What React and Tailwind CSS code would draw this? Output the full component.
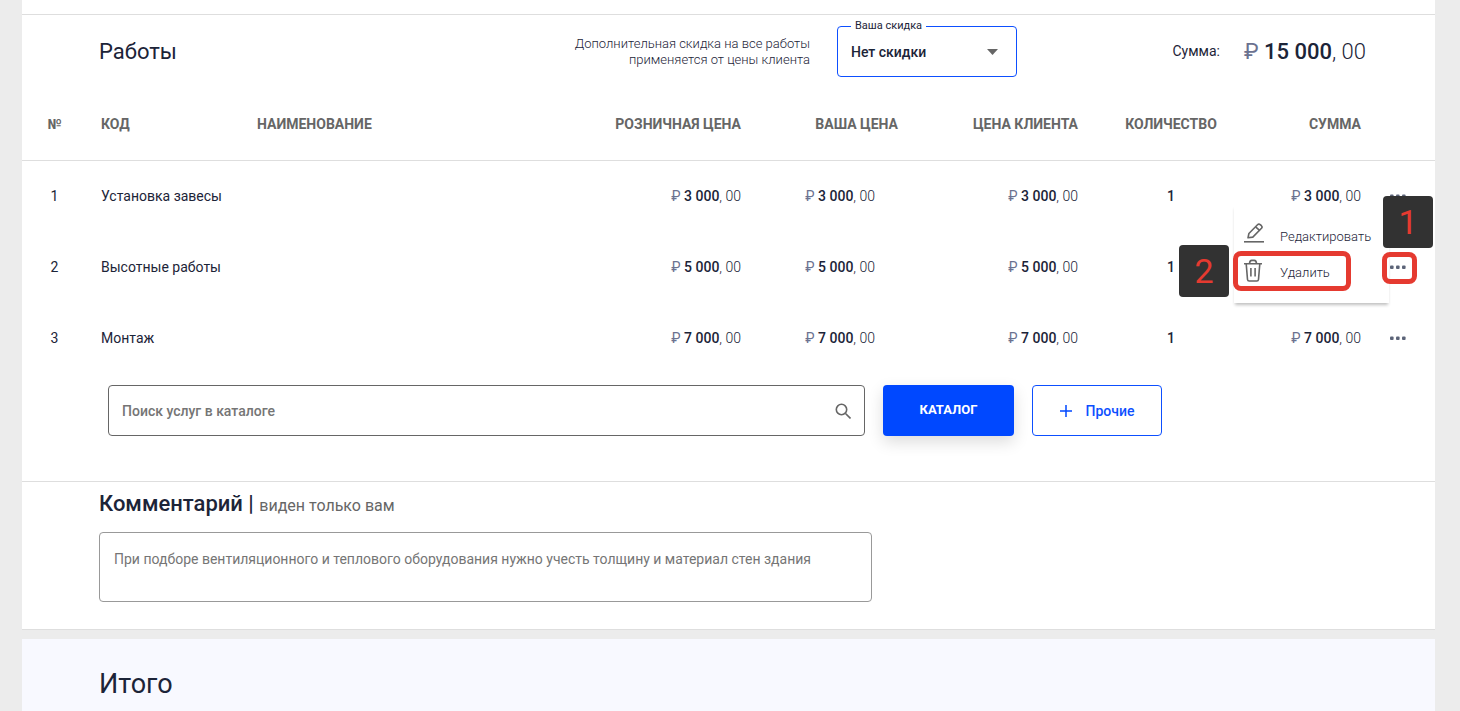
import { useState } from "react";

const works = [
  { id: 1, code: "Установка завесы", price: "3 000", count: 1 },
  { id: 2, code: "Высотные работы", price: "5 000", count: 1 },
  { id: 3, code: "Монтаж", price: "7 000", count: 1 },
];

function Price({ value }) {
  return (
    <span className="whitespace-nowrap">
      <span className="text-[#6b7290]">₽</span>{" "}
      <span className="font-medium">{value}</span>
      <span className="font-light">, 00</span>
    </span>
  );
}

function DotsIcon() {
  return (
    <svg width="18" height="6" viewBox="0 0 18 6" fill="#5c6478">
      <rect x="1" y="1.500" width="3.600" height="3.400" rx="1" />
      <rect x="7" y="1.500" width="3.600" height="3.400" rx="1" />
      <rect x="13" y="1.500" width="3.600" height="3.400" rx="1" />
    </svg>
  );
}

function EditIcon() {
  return (
    <svg width="20" height="28" viewBox="0 0 20 28" fill="none" stroke="#666" strokeWidth="1.600">
      <path d="M0 18.800h20" />
      <path d="M4 14.800l.9-4.300 8.600-8.700q1.300-1.300 2.700-.2l1.200 1.100q1.300 1.300.1 2.600l-8.700 8.800z" strokeLinejoin="round" />
      <path d="M11.600 3.800l4.200 3.900" />
    </svg>
  );
}

function TrashIcon() {
  return (
    <svg width="20" height="28" viewBox="0 0 20 28" fill="none" stroke="#666" strokeWidth="1.600">
      <path d="M0 4.800h18M5.500 4.800q.2-3.400 2.200-3.400h2.600q2 0 2.200 3.400M2.200 4.800l1.300 15.700q.2 1.500 1.600 1.500h7.800q1.400 0 1.600-1.500l1.300-15.700" strokeLinejoin="round" />
      <path d="M6.900 9v8.500M11.100 9v8.500" />
    </svg>
  );
}

function Badge({ children, className }) {
  return (
    <span
      className={`absolute z-20 flex h-[52px] w-[50px] items-center justify-center rounded-sm bg-[#323232] text-[34px] font-normal text-[#e53a30] ${className}`}
    >
      {children}
    </span>
  );
}

function RowMenu() {
  return (
    <div className="absolute -top-[26px] right-[46px] z-10 w-[155px] bg-white pt-3.5 pb-3 text-[13px] font-light shadow-[0_3px_3px_-1px_rgba(0,0,0,0.25)]">
      <button className="flex h-9 w-full items-center gap-4 pl-2.5">
        <EditIcon />
        Редактировать
      </button>
      <button className="relative flex h-9 w-full items-center gap-4 pl-2.5">
        <TrashIcon />
        Удалить
        <span className="absolute -top-1 -left-px h-10 w-[118px] rounded-lg border-5 border-[#e53a30]" />
      </button>
      <Badge className="top-10 right-40">2</Badge>
    </div>
  );
}

export default function App() {
  const [discount, setDiscount] = useState("none");
  const [search, setSearch] = useState("");
  const [comment, setComment] = useState("");
  const [openMenu, setOpenMenu] = useState(2);

  return (
    <div className="min-h-screen bg-[#ececec] pr-[25px] pl-[22px] font-[Roboto,sans-serif] text-sm text-[#1c2438]">
      <section className="border-b border-[#dedede] bg-white pt-3.5">
        <header className="flex h-[74px] items-center border-t border-[#dedede] pr-[69px] pl-[77px]">
          <h2 className="text-[22px]">Работы</h2>
          <p className="ml-auto w-[250px] text-right text-[13px] leading-4 font-light">
            Дополнительная скидка на все работы применяется от цены клиента
          </p>
          <div className="relative ml-[27px]">
            <label htmlFor="discount" className="absolute -top-2 left-3.5 bg-white px-1 text-[11px] leading-4">
              Ваша скидка
            </label>
            <select
              id="discount"
              value={discount}
              onChange={(e) => setDiscount(e.target.value)}
              className="h-[51px] w-[180px] appearance-none rounded border border-[#0d4fff] pr-10 pl-[13px] font-medium"
            >
              <option value="none">Нет скидки</option>
              <option value="5">5%</option>
              <option value="10">10%</option>
            </select>
            <svg className="pointer-events-none absolute top-[23px] right-[19px]" width="11" height="6" viewBox="0 0 11 6" fill="#666">
              <path d="M0 0h11L5.500 6z" />
            </svg>
          </div>
          <div className="flex w-[349px] items-center justify-end gap-6">
            <span>Сумма:</span>
            <span className="text-[22px]">
              <Price value="15 000" />
            </span>
          </div>
        </header>

        <table className="w-full table-fixed text-left">
          <thead className="border-b border-[#dedede] text-[#666] uppercase">
            <tr className="h-[72px]">
              <th className="w-[65px] text-center font-bold">№</th>
              <th className="w-[156px] pl-3.5 font-bold">Код</th>
              <th className="pl-3.5 font-bold">Наименование</th>
              <th className="w-[155px] pr-3.5 text-right font-bold">Розничная цена</th>
              <th className="w-[157px] pr-3.5 text-right font-bold">Ваша цена</th>
              <th className="w-[180px] pr-3.5 text-right font-bold">Цена клиента</th>
              <th className="w-[158px] text-center font-bold">Количество</th>
              <th className="w-[125px] pr-3.5 text-right font-bold">Сумма</th>
              <th className="w-[60px]" aria-label="Действия" />
            </tr>
          </thead>
          <tbody>
            {works.map((work) => (
              <tr key={work.id} className="h-[71px]">
                <td className="text-center">{work.id}</td>
                <td className="pl-3.5">{work.code}</td>
                <td />
                <td className="pr-3.5 text-right"><Price value={work.price} /></td>
                <td className="pr-[37px] text-right"><Price value={work.price} /></td>
                <td className="pr-3.5 text-right"><Price value={work.price} /></td>
                <td className="text-center font-medium">{work.count}</td>
                <td className="pr-3.5 text-right">
                  {openMenu !== work.id && <Price value={work.price} />}
                </td>
                <td className="relative pl-3.5">
                  <button
                    className="flex h-6 items-center"
                    aria-label="Действия"
                    onClick={() => setOpenMenu(openMenu === work.id ? null : work.id)}
                  >
                    <DotsIcon />
                  </button>
                  {openMenu === work.id && (
                    <>
                      <RowMenu />
                      <Badge className="-top-[35px] right-0.5">1</Badge>
                      <span className="pointer-events-none absolute top-[21px] left-[7px] z-20 h-8 w-[35px] rounded-lg border-5 border-[#e53a30]" />
                    </>
                  )}
                </td>
              </tr>
            ))}
          </tbody>
        </table>

        <div className="flex gap-[18px] pt-3 pr-[273px] pb-[45px] pl-[86px]">
          <div className="flex h-[51px] flex-1 items-center rounded-sm border border-[#666] px-[13px]">
            <input
              aria-label="Поиск услуг в каталоге"
              placeholder="Поиск услуг в каталоге"
              value={search}
              onChange={(e) => setSearch(e.target.value)}
              className="flex-1 font-medium outline-none placeholder:text-[#757575]"
            />
            <svg width="16" height="16" viewBox="0 0 16 16" fill="none" stroke="#666" strokeWidth="1.600">
              <circle cx="6.500" cy="6.500" r="5.200" />
              <path d="M10.500 10.500l5 5" />
            </svg>
          </div>
          <button className="w-[131px] rounded bg-[#0048ff] text-[13px] font-bold text-white shadow-[0_6px_16px_rgba(0,0,0,0.14)]">
            КАТАЛОГ
          </button>
          <button className="flex w-[130px] items-center justify-center gap-3.5 rounded border border-[#0d4fff] font-medium text-[#0d4fff]">
            <svg width="12" height="12" viewBox="0 0 12 12" stroke="#0048ff" strokeWidth="1.500">
              <path d="M6 0v12M0 6h12" />
            </svg>
            Прочие
          </button>
        </div>

        <div className="border-t border-[#dedede] pt-1.5 pr-[563px] pb-[27px] pl-[77px]">
          <h2 className="text-[22px] leading-8 font-medium">
            <label htmlFor="comment">
              Комментарий | <span className="text-base font-normal text-[#666]">виден только вам</span>
            </label>
          </h2>
          <textarea
            id="comment"
            placeholder="При подборе вентиляционного и теплового оборудования нужно учесть толщину и материал стен здания"
            value={comment}
            onChange={(e) => setComment(e.target.value)}
            className="mt-3 block h-[70px] w-full resize-none rounded border border-[#999] px-3.5 py-4 outline-none placeholder:text-[#757575]"
          />
        </div>
      </section>

      <section className="mt-[9px] bg-[#f8f9ff] pt-[29px] pb-3 pl-[77px]">
        <h2 className="text-[27px] leading-8">Итого</h2>
      </section>
    </div>
  );
}
